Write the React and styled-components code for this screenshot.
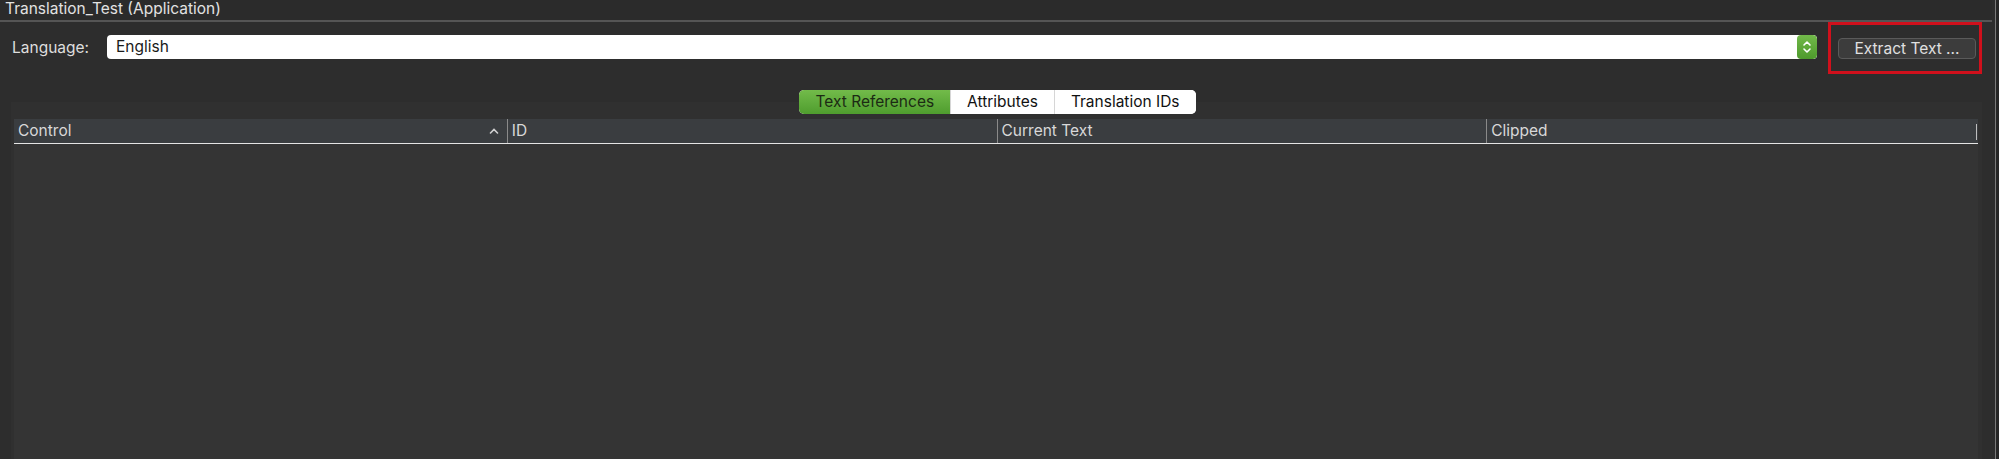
import styled, { createGlobalStyle } from "styled-components";

const GlobalStyle = createGlobalStyle`
  html, body {
    margin: 0;
    padding: 0;
    background: #2c2c2c;
  }
  body {
    font-family: "Inter", "Liberation Sans", sans-serif;
    font-size: 15.5px;
    color: #dcdcdc;
  }
`;

const tabs = ["Text References", "Attributes", "Translation IDs"];
const columns = ["Control", "ID", "Current Text", "Clipped"];

const App = () => {
  return (
    <>
      <GlobalStyle />
      <Window>
        <Main>
          <TitleBar>Translation_Test (Application)</TitleBar>
          <Toolbar>
            <Label>Language:</Label>
            <Select>
              <SelectValue>English</SelectValue>
              <Stepper>
                <svg width="10" height="14" viewBox="0 0 10 14">
                  <path
                    d="M2 5 L5 2 L8 5 M2 9 L5 12 L8 9"
                    fill="none"
                    stroke="#fff"
                    strokeWidth="1.6"
                    strokeLinecap="round"
                    strokeLinejoin="round"
                  />
                </svg>
              </Stepper>
            </Select>
            <Highlight>
              <Button>Extract Text ...</Button>
            </Highlight>
          </Toolbar>
          <TabArea>
            <TabStrip>
              {tabs.map((t, i) => (
                <Tab key={t} $active={i === 0}>
                  {t}
                </Tab>
              ))}
            </TabStrip>
            <TabPanel>
              <Table>
                <HeaderRow>
                  {columns.map((c, i) => (
                    <HeaderCell key={c} $first={i === 0}>
                      <span>{c}</span>
                      {i === 0 && (
                        <SortCaret viewBox="0 0 10 6" width="10" height="6">
                          <path
                            d="M1.5 5 L5 1.5 L8.5 5"
                            fill="none"
                            stroke="#d0d0d0"
                            strokeWidth="1.6"
                            strokeLinecap="round"
                          />
                        </SortCaret>
                      )}
                    </HeaderCell>
                  ))}
                  <EndMark />
                </HeaderRow>
                <Body />
              </Table>
            </TabPanel>
          </TabArea>
        </Main>
        <RightEdge />
      </Window>
    </>
  );
};

export default App;

const Window = styled.div`
  display: flex;
  width: 1999px;
  height: 459px;
  overflow: hidden;
  background: #2d2d2d;
`;

const Main = styled.div`
  flex: 1;
  display: flex;
  flex-direction: column;
  min-width: 0;
`;

const RightEdge = styled.div`
  width: 3px;
  border-left: 1px solid #7a7a7a;
  background: #262626;
`;

const TitleBar = styled.div`
  height: 20px;
  line-height: 18px;
  padding-left: 5px;
  margin-right: 3px;
  color: #e2e2e2;
  border-bottom: 2px solid #555;
  background: #2b2b2b;
`;

const Toolbar = styled.div`
  display: flex;
  align-items: center;
  height: 52px;
  padding-left: 12px;
  padding-right: 13px;
`;

const Label = styled.div`
  width: 95px;
  color: #dedede;
  margin-top: -1px;
`;

const Select = styled.div`
  flex: 1;
  display: flex;
  height: 24px;
  margin-top: -2px;
  background: #ffffff;
  border-radius: 4px;
  overflow: hidden;
`;

const SelectValue = styled.div`
  flex: 1;
  padding-left: 9px;
  line-height: 24px;
  color: #1a1a1a;
`;

const Stepper = styled.div`
  width: 20px;
  display: flex;
  align-items: center;
  justify-content: center;
  background: linear-gradient(#72b94a, #4e9a2c);
  border-radius: 4px;
`;

const Highlight = styled.div`
  display: flex;
  align-items: center;
  box-sizing: border-box;
  width: 154px;
  height: 52px;
  margin-left: 11px;
  padding-left: 7px;
  border: 3px solid #d0101c;
`;

const Button = styled.div`
  box-sizing: border-box;
  width: 138px;
  height: 21px;
  line-height: 19px;
  text-align: center;
  color: #e0e0e0;
  background: #3c3c3c;
  border: 1px solid #5a5a5a;
  border-radius: 4px;
`;

const TabArea = styled.div`
  flex: 1;
  display: flex;
  flex-direction: column;
  padding-top: 16px;
  margin-left: 11px;
  margin-right: 13px;
`;

const TabStrip = styled.div`
  position: relative;
  z-index: 1;
  align-self: center;
  display: flex;
  height: 24px;
  margin-left: 2px;
  background: #fff;
  border-radius: 5px;
  overflow: hidden;
`;

const Tab = styled.div`
  padding: 0 16px;
  line-height: 24px;
  color: ${(p) => (p.$active ? "#1c2a14" : "#111")};
  background: ${(p) =>
    p.$active ? "linear-gradient(#72bb4a, #4f9d2e)" : "#ffffff"};
  border-right: 1px solid #d6d6d6;
  &:last-child {
    border-right: none;
  }
`;

const TabPanel = styled.div`
  flex: 1;
  display: flex;
  flex-direction: column;
  margin-top: -12px;
  padding: 17px 4px 0 3px;
  background: #303030;
`;

const Table = styled.div`
  flex: 1;
  display: flex;
  flex-direction: column;
`;

const HeaderRow = styled.div`
  display: flex;
  height: 24px;
  background: #3a3d40;
  border-bottom: 1px solid #e4e4e4;
`;

const HeaderCell = styled.div`
  flex: 1;
  display: flex;
  align-items: center;
  justify-content: space-between;
  padding: 0 ${(p) => (p.$first ? "8px" : "4px")} 0 4px;
  color: #d8d8d8;
  border-left: ${(p) => (p.$first ? "none" : "1px solid #8a8a8a")};
  background-clip: padding-box;
  span {
    line-height: 24px;
  }
`;

const SortCaret = styled.svg`
  display: block;
`;

const EndMark = styled.div`
  width: 1px;
  margin: 5px 1px 3px 0;
  background: #bdbdbd;
`;

const Body = styled.div`
  flex: 1;
  background: #343434;
`;
